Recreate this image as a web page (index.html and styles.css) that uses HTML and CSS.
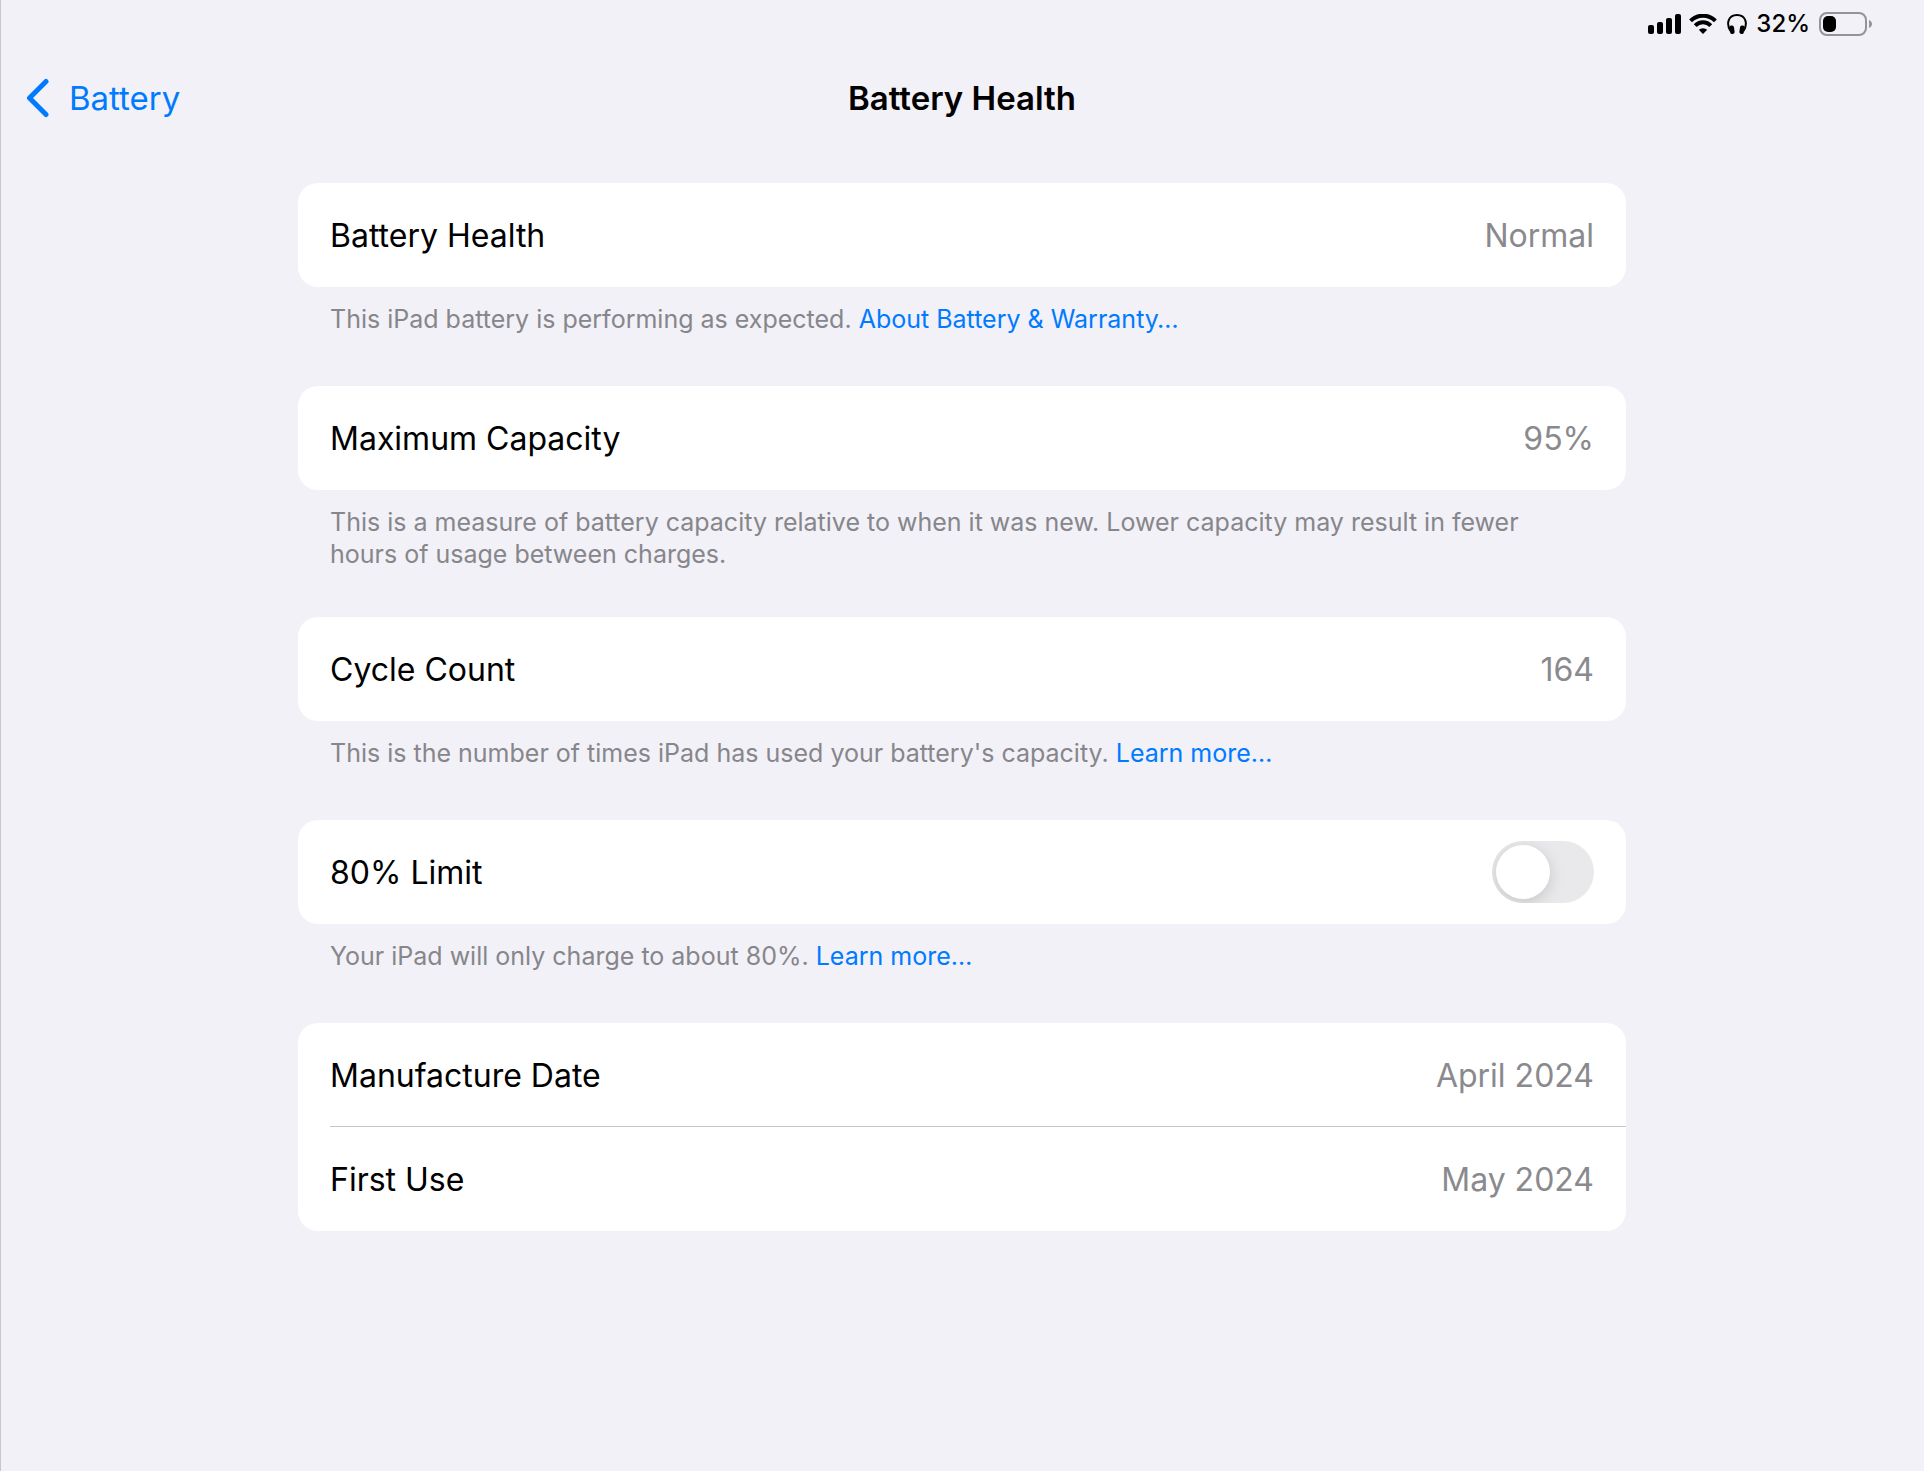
FILE: index.html
```html
<!DOCTYPE html>
<html lang="en">
<head>
<meta charset="utf-8">
<meta name="viewport" content="width=device-width, initial-scale=1">
<title>Battery Health</title>
<link rel="stylesheet" href="styles.css">
</head>
<body>
<div class="status-bar">
  <svg class="signal" width="34" height="20" viewBox="0 0 34 20" role="img" aria-label="Cellular signal">
    <rect x="0" y="11" width="6" height="9" rx="2"/>
    <rect x="9" y="8" width="6" height="12" rx="2"/>
    <rect x="18" y="4" width="6" height="16" rx="2"/>
    <rect x="27" y="0" width="6" height="20" rx="2"/>
  </svg>
  <svg class="wifi" width="28" height="20" viewBox="0 0 28 20" role="img" aria-label="Wi-Fi">
    <path d="M1.600 6.800a17.500 17.500 0 0 1 24.800 0M6.200 11.600a11 11 0 0 1 15.600 0" fill="none" stroke="#000" stroke-width="4"/>
    <path d="M14 20l-4.200-4.200a6.200 6.200 0 0 1 8.400 0z"/>
  </svg>
  <svg class="headphones" width="20" height="20" viewBox="0 0 20 20" role="img" aria-label="Headphones">
    <path d="M3.500 17C-1 10 1 1.100 10 1.100S21 10 16.500 17" fill="none" stroke="#000" stroke-width="2"/>
    <rect x="2.800" y="11.500" width="4.500" height="8.500" rx="2" transform="rotate(-8 5 15.700)"/>
    <rect x="12.700" y="11.500" width="4.500" height="8.500" rx="2" transform="rotate(8 15 15.700)"/>
  </svg>
  <span class="status-text">32%</span>
  <svg class="battery" width="54" height="24" viewBox="0 0 54 24" role="img" aria-label="Battery level">
    <rect x="1" y="1" width="46" height="22" rx="7" fill="none" stroke="#949398" stroke-width="2"/>
    <rect x="4" y="4" width="13" height="16" rx="5"/>
    <path d="M50 8c4 1.500 4 6.500 0 8z" fill="#949398"/>
  </svg>
</div>
<header class="nav-bar">
  <a class="back" href="#battery">
    <svg class="chevron" width="24" height="40" viewBox="0 0 24 40" aria-hidden="true"><path d="M20 3.500L3.500 20 20 36.500" fill="none" stroke="currentColor" stroke-width="5" stroke-linecap="round" stroke-linejoin="round"/></svg>
    <span>Battery</span>
  </a>
  <h1 class="title">Battery Health</h1>
</header>
<main class="settings">
  <section class="group">
    <div class="card"><div class="row"><span>Battery Health</span><span class="value">Normal</span></div></div>
    <p class="note">This iPad battery is performing as expected. <a href="#warranty">About Battery &amp; Warranty…</a></p>
  </section>
  <section class="group">
    <div class="card"><div class="row"><span>Maximum Capacity</span><span class="value">95%</span></div></div>
    <p class="note">This is a measure of battery capacity relative to when it was new. Lower capacity may result in fewer hours of usage between charges.</p>
  </section>
  <section class="group">
    <div class="card"><div class="row"><span>Cycle Count</span><span class="value">164</span></div></div>
    <p class="note">This is the number of times iPad has used your battery's capacity. <a href="#cycles">Learn more…</a></p>
  </section>
  <section class="group">
    <div class="card"><div class="row"><label for="limit">80% Limit</label><input class="switch" id="limit" type="checkbox" role="switch"></div></div>
    <p class="note">Your iPad will only charge to about 80%. <a href="#limit-info">Learn more…</a></p>
  </section>
  <section class="group">
    <div class="card">
      <div class="row"><span>Manufacture Date</span><span class="value">April 2024</span></div>
      <div class="row"><span>First Use</span><span class="value">May 2024</span></div>
    </div>
  </section>
</main>
</body>
</html>
```
FILE: styles.css
```css
* { box-sizing: border-box; }
body {
  margin: 0;
  min-height: 100vh;
  box-shadow: inset 1px 0 #c8c8cc;
  background: #f2f1f7;
  color: #000;
  font-family: Inter, "Liberation Sans", sans-serif;
  font-size: 32px;
  line-height: 40px;
}
a { color: #007aff; text-decoration: none; }
.status-bar {
  display: flex;
  align-items: center;
  justify-content: flex-end;
  height: 48px;
  padding-right: 51px;
}
.wifi { margin-left: 7px; }
.headphones { margin-left: 10px; }
.status-text { margin: 0 9px; font-size: 24px; font-weight: 500; line-height: 32px; }
.nav-bar {
  display: grid;
  grid-template-columns: 1fr auto 1fr;
  align-items: center;
  height: 100px;
  padding: 0 26px;
  font-size: 33px;
}
.back { display: flex; align-items: center; gap: 19px; justify-self: start; }
.title { margin: 0; font-size: 33px; font-weight: 600; line-height: 40px; }
.settings {
  max-width: 1392px;
  margin: 0 auto;
  padding: 35px 32px 48px;
}
.card { overflow: hidden; border-radius: 20px; background: #fff; }
.row {
  display: flex;
  align-items: center;
  justify-content: space-between;
  height: 104px;
  margin-left: 32px;
  padding-right: 32px;
  line-height: 42px;
}
.row > span, .row > label { padding-top: 2px; }
.row + .row { box-shadow: 0 -1px #c6c6c8; }
.value { color: #8a8a8e; }
.note {
  min-height: 36px;
  margin: 16px 40px 47px 32px;
  color: #86868b;
  font-size: 25px;
  line-height: 32px;
}
.switch {
  appearance: none;
  display: flex;
  width: 102px;
  height: 62px;
  margin: 0;
  padding: 4px;
  overflow: hidden;
  border-radius: 31px;
  background: #e9e9eb;
}
.switch::before {
  content: "";
  width: 54px;
  height: 54px;
  border-radius: 50%;
  background: #fff;
  box-shadow: 0 4px 16px rgba(0, 0, 0, 0.15);
}
.switch:checked { justify-content: flex-end; background: #34c759; }
```
